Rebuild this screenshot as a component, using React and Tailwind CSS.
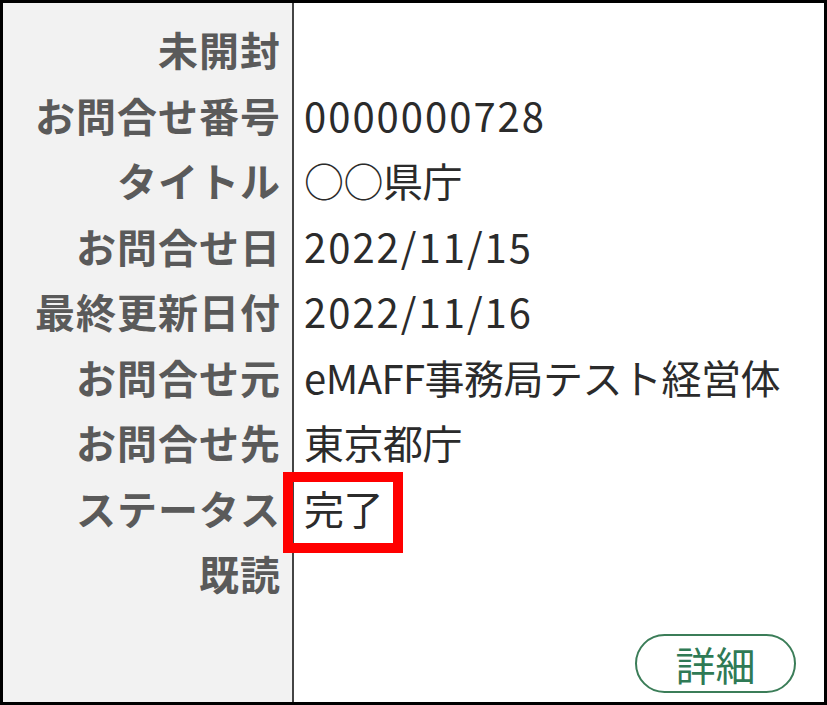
const rows = [
  { label: '未開封', value: '' },
  { label: 'お問合せ番号', value: '0000000728', num: true },
  { label: 'タイトル', value: '○○県庁' },
  { label: 'お問合せ日', value: '2022/11/15', num: true },
  { label: '最終更新日付', value: '2022/11/16', num: true },
  { label: 'お問合せ元', value: 'eMAFF事務局テスト経営体' },
  { label: 'お問合せ先', value: '東京都庁' },
  { label: 'ステータス', value: '完了' },
  { label: '既読', value: '' },
]

export default function App() {
  return (
    <div
      className="relative flex h-[705px] w-[827px] border-[3px] border-black bg-white text-[40px]"
      style={{ fontFamily: '"Noto Sans CJK JP", "Noto Sans", sans-serif' }}
    >
      <div className="flex w-[291px] shrink-0 flex-col border-r-2 border-[#444] bg-[#f2f2f2] pt-[14px] pr-[11px]">
        {rows.map((row) => (
          <div
            key={row.label}
            className="h-[65.5px] text-right font-bold leading-[65.5px] tracking-[1px] text-[#5a5a5a]"
          >
            {row.label}
          </div>
        ))}
      </div>

      <div className="flex flex-1 flex-col pt-[14px] pl-[10px] pr-[28px] pb-[9px]">
        {rows.map((row) => (
          <div
            key={row.label}
            className={
              row.num
                ? 'h-[65.5px] whitespace-nowrap leading-[65.5px] tracking-[2px] text-[#2b2b2b]'
                : 'h-[65.5px] whitespace-nowrap leading-[65.5px] tracking-[-0.5px] text-[#2b2b2b]'
            }
          >
            {row.value}
          </div>
        ))}
        <button
          type="button"
          className="mt-auto flex h-[59px] w-[161px] items-center justify-center self-end rounded-full border-2 border-[#3b7d58] bg-white text-[40px] leading-none text-[#2f7a55]"
        >
          詳細
        </button>
      </div>

      <div className="pointer-events-none absolute left-[280px] top-[469px] h-[81px] w-[120px] border-[10px] border-[#ff0000]" />
    </div>
  )
}
